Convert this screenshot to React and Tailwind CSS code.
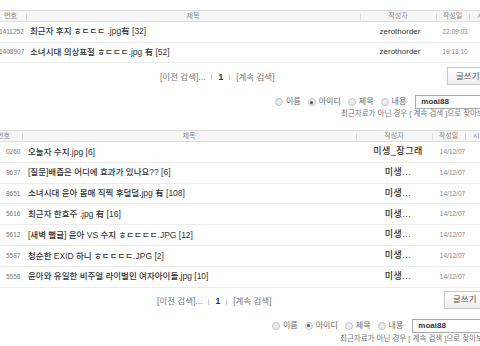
const topRows = [
  { no: '1411252', title: '최근자 후지 ㅎㄷㄷㄷ .jpg有 [32]', author: 'zerothorder', date: '22:09:03' },
  { no: '1408907', title: '소녀시대 의상표절 ㅎㄷㄷㄷ.jpg 有 [52]', author: 'zerothorder', date: '19:13:10' },
];

const bottomRows = [
  { no: '0260', title: '오늘자 수지.jpg [6]', author: '미생_장그래' },
  { no: '9637', title: '[질문]배즙은 어디에 효과가 있나요?? [6]', author: '미생...' },
  { no: '8651', title: '소녀시대 윤아 몸매 직찍 후덜덜.jpg 有 [108]', author: '미생...' },
  { no: '5616', title: '최근자 한효주 .jpg 有 [16]', author: '미생...' },
  { no: '5612', title: '[새벽 뻘글] 윤아 VS 수지 ㅎㄷㄷㄷㄷ.JPG [12]', author: '미생...' },
  { no: '5587', title: '청순한 EXID 하니 ㅎㄷㄷㄷㄷ.JPG [2]', author: '미생...' },
  { no: '5558', title: '윤아와 유일한 비주얼 라이벌인 여자아이돌.jpg [10]', author: '미생...' },
];

function Divider() {
  return <span className="absolute left-0 top-[2px] h-[7px] w-px bg-[#dcdcdc]" />;
}

function Header({ numW, numLabel }) {
  return (
    <div className="flex h-[12px] border-y border-[#dedede] bg-[#f6f6f6] text-[7px] leading-[10px] text-[#8a8a8a]">
      <div style={{ width: numW }} className="relative shrink-0 overflow-hidden whitespace-nowrap pl-[4px]">
        {numLabel}
      </div>
      <div className="relative w-[334px] shrink-0 text-center">
        <Divider />제목
      </div>
      <div className="relative w-[76px] shrink-0 text-center">
        <Divider />작성자
      </div>
      <div className="relative w-[33px] shrink-0 text-center">
        <Divider />작성일
      </div>
      <div className="relative w-[20px] shrink-0 pl-[8px]">
        <Divider />시
      </div>
    </div>
  );
}

function Pager({ pl }) {
  return (
    <div style={{ paddingLeft: pl }} className="flex h-[12px] items-center gap-[6px] text-[8.5px] text-[#777]">
      <span>[이전 검색]...</span>
      <span className="h-[6px] w-px bg-[#ccc]" />
      <span className="font-bold text-[#333]">1</span>
      <span className="h-[6px] w-px bg-[#ccc]" />
      <span>[계속 검색]</span>
    </div>
  );
}

function Radio({ checked, label }) {
  return (
    <span className="flex items-center gap-[3px]">
      <span className="flex h-[8px] w-[8px] items-center justify-center rounded-full border border-[#c4c4c4] bg-[#ececec]">
        {checked && <span className="h-[3px] w-[3px] rounded-full bg-[#555]" />}
      </span>
      <span className="mr-[7px]">{label}</span>
    </span>
  );
}

function SearchBox({ pl, helpPl, helpMt }) {
  return (
    <div className="whitespace-nowrap">
      <div style={{ paddingLeft: pl }} className="flex h-[14px] items-center text-[8px] text-[#666]">
        <Radio label="이름" />
        <Radio checked label="아이디" />
        <Radio label="제목" />
        <Radio label="내용" />
        <span className="ml-[2px] flex h-[14px] w-[80px] shrink-0 items-center border border-[#aaa] pl-[5px] text-[8px] font-bold text-[#333]">
          moai88
        </span>
      </div>
      <div style={{ paddingLeft: helpPl, marginTop: helpMt }} className="text-[7.5px] leading-[9px] text-[#777]">
        최근자료가 아닌 경우 [ 계속 검색 ]으로 찾아보세요
      </div>
    </div>
  );
}

function WriteButton() {
  return (
    <div className="flex h-[18px] w-[40px] shrink-0 items-center border border-[#c8c8c8] bg-gradient-to-b from-white to-[#eeeeee] pl-[8px] text-[8.5px] text-[#555]">
      글쓰기
    </div>
  );
}

export default function App() {
  return (
    <div className="h-[346px] w-[480px] overflow-hidden bg-white font-['Liberation_Sans','Noto_Sans_CJK_KR',sans-serif]">
      <div className="w-[500px] pt-[10px]">
        <Header numW={26} numLabel="번호" />
        {topRows.map((r) => (
          <div key={r.no} className="flex h-[20.5px] items-center border-b border-[#ececec]">
            <div className="w-[26px] shrink-0 overflow-hidden pl-px text-[6.5px] text-[#777]">
              <span className="ml-[-2px]">{r.no}</span>
            </div>
            <div className="w-[334px] shrink-0 pl-[4px] text-[8.5px] font-medium text-[#333]">{r.title}</div>
            <div className="w-[80px] shrink-0 text-center text-[8px] text-[#333]">{r.author}</div>
            <div className="w-[30px] shrink-0 text-center text-[6.5px] text-[#888]">{r.date}</div>
          </div>
        ))}
        <div className="flex items-start">
          <div className="w-[447px] shrink-0 pt-[8px]">
            <Pager pl={160} />
          </div>
          <div className="pt-[4px]">
            <WriteButton />
          </div>
        </div>
        <div className="mt-[10px]">
          <SearchBox pl={275} helpPl={341} helpMt={0} />
        </div>
      </div>

      <div className="mt-[12px] w-[500px]">
        <Header numW={22} numLabel={<span className="ml-[-7px]">번호</span>} />
        {bottomRows.map((r) => (
          <div key={r.no} className="flex h-[20.8px] items-center border-b border-[#ececec]">
            <div className="w-[22px] shrink-0 pl-[6px] text-[6.5px] text-[#777]">{r.no}</div>
            <div className="w-[338px] shrink-0 pl-[6px] text-[8.5px] font-medium text-[#333]">{r.title}</div>
            <div className="w-[76px] shrink-0 text-center text-[9px] font-medium tracking-[0.5px] text-[#333]">
              {r.author}
            </div>
            <div className="w-[33px] shrink-0 text-center text-[6.5px] text-[#888]">14/12/07</div>
          </div>
        ))}
        <div className="flex items-start">
          <div className="w-[444px] shrink-0 pt-[8px]">
            <Pager pl={157} />
          </div>
          <div className="pt-[3px]">
            <WriteButton />
          </div>
        </div>
        <div className="mt-[10px]">
          <SearchBox pl={272} helpPl={340} helpMt={1} />
        </div>
      </div>
    </div>
  );
}
